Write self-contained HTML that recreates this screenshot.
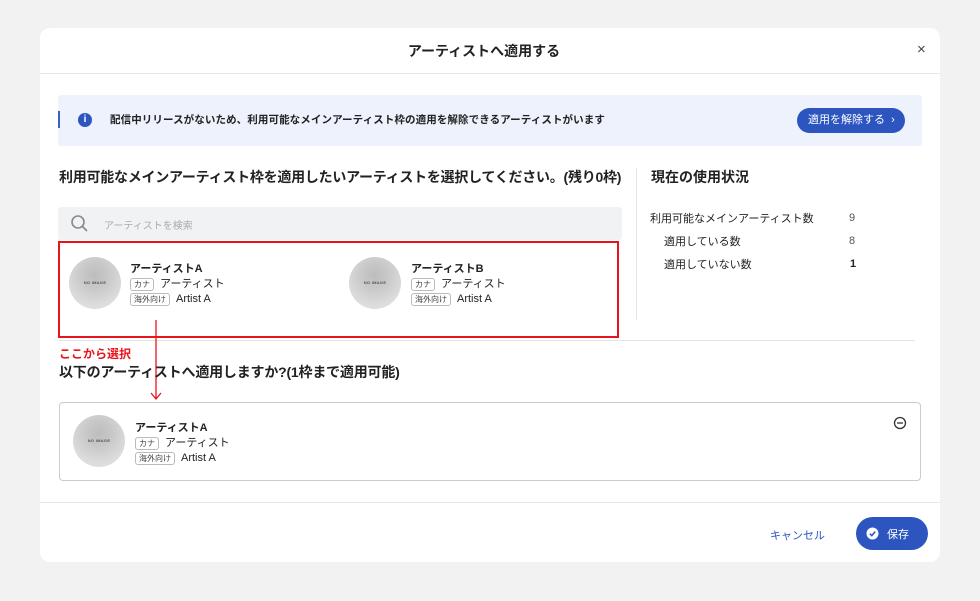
<!DOCTYPE html>
<html><head><meta charset="utf-8"><style>
*{box-sizing:border-box;margin:0;padding:0}
body{width:980px;height:601px;background:#f2f2f2;font-family:"Liberation Sans","Noto Sans CJK JP",sans-serif;color:#222;position:relative;overflow:hidden}
.a{position:absolute}
.modal{left:40px;top:28px;width:900px;height:534px;background:#fff;border-radius:10px}
.b{font-weight:bold}
.av{position:absolute;width:52px;height:52px;border-radius:50%;background:radial-gradient(circle at 50% 35%,#bdbdbd 0,#c8c8c8 30%,#dcdcdc 70%,#e6e6e6 100%);font-size:4px;font-weight:bold;color:#555;text-align:center;line-height:52px;letter-spacing:.3px}
.tag{display:inline-block;border:1px solid #bbb;border-radius:3px;font-size:8px;padding:0 3px;line-height:11px;color:#444;margin-right:6px}
.ln{font-size:11px;line-height:15px;white-space:nowrap}
</style></head><body>
<div class="a modal"></div>
<div class="a b" style="left:-6px;width:980px;top:41px;text-align:center;font-size:14px">アーティストへ適用する</div>
<div class="a" style="left:917px;top:41px;font-size:15px;color:#444">×</div>
<div class="a" style="left:40px;top:73px;width:900px;height:1px;background:#e6e6e6"></div>
<div class="a" style="left:58px;top:95px;width:864px;height:51px;background:#edf2fc;border-radius:3px"></div>
<div class="a" style="left:58px;top:111px;width:2px;height:17px;background:#3a5fc0"></div>
<div class="a" style="left:78px;top:113px;width:14px;height:14px;border-radius:50%;background:#2c55c0;color:#fff;font-size:10px;font-weight:bold;text-align:center;line-height:14px">i</div>
<div class="a b" style="left:110px;top:112px;font-size:10.5px;letter-spacing:0.1px;white-space:nowrap">配信中リリースがないため、利用可能なメインアーティスト枠の適用を解除できるアーティストがいます</div>
<div class="a" style="left:797px;top:108px;width:108px;height:25px;border-radius:13px;background:#2c55c0;color:#fff;font-size:11px;line-height:25px;padding-left:11px">適用を解除する&nbsp; ›</div>
<div class="a b" style="left:59px;top:167px;font-size:14px;letter-spacing:-0.25px;white-space:nowrap">利用可能なメインアーティスト枠を適用したいアーティストを選択してください。(残り0枠)</div>
<div class="a" style="left:636px;top:168px;width:1px;height:152px;background:#e3e3e3"></div>
<div class="a b" style="left:651px;top:167px;font-size:14px">現在の使用状況</div>
<div class="a" style="left:650px;top:210px;font-size:11px">利用可能なメインアーティスト数</div>
<div class="a" style="left:849px;top:212px;font-size:11px;color:#555">9</div>
<div class="a" style="left:664px;top:233px;font-size:11px">適用している数</div>
<div class="a" style="left:849px;top:235px;font-size:11px;color:#555">8</div>
<div class="a" style="left:664px;top:256px;font-size:11px">適用していない数</div>
<div class="a b" style="left:850px;top:258px;font-size:11px">1</div>
<div class="a" style="left:58px;top:207px;width:564px;height:33px;background:#f1f2f4;border-radius:3px"></div>
<svg class="a" style="left:70px;top:214px" width="20" height="20"><circle cx="8" cy="8" r="6" fill="none" stroke="#888" stroke-width="1.6"/><line x1="12.5" y1="12.5" x2="17" y2="17" stroke="#888" stroke-width="1.6"/></svg>
<div class="a" style="left:104px;top:217px;font-size:10px;color:#aaa">アーティストを検索</div>
<div class="a" style="left:58px;top:241px;width:561px;height:97px;border:2px solid #e8141b"></div>
<div class="av" style="left:69px;top:257px">NO IMAGE</div>
<div class="a" style="left:130px;top:262px"><div class="ln b">アーティストA</div><div class="ln"><span class="tag">カナ</span>アーティスト</div><div class="ln"><span class="tag">海外向け</span>Artist A</div></div>
<div class="av" style="left:349px;top:257px">NO IMAGE</div>
<div class="a" style="left:411px;top:262px"><div class="ln b">アーティストB</div><div class="ln"><span class="tag">カナ</span>アーティスト</div><div class="ln"><span class="tag">海外向け</span>Artist A</div></div>
<div class="a" style="left:58px;top:340px;width:857px;height:1px;background:#e3e3e3"></div>
<div class="a b" style="left:59px;top:345px;font-size:12px;color:#e8141b">ここから選択</div>
<svg class="a" style="left:150px;top:320px" width="12" height="82"><line x1="6" y1="0" x2="6" y2="79" stroke="#e8141b" stroke-width="1.3"/><polyline points="1,73 6,79 11,73" fill="none" stroke="#e8141b" stroke-width="1.3"/></svg>
<div class="a b" style="left:59px;top:362px;font-size:14px;letter-spacing:-0.2px">以下のアーティストへ適用しますか?(1枠まで適用可能)</div>
<div class="a" style="left:59px;top:402px;width:862px;height:79px;border:1px solid #ccc;border-radius:4px"></div>
<div class="av" style="left:73px;top:415px">NO IMAGE</div>
<div class="a" style="left:135px;top:421px"><div class="ln b">アーティストA</div><div class="ln"><span class="tag">カナ</span>アーティスト</div><div class="ln"><span class="tag">海外向け</span>Artist A</div></div>
<svg class="a" style="left:893px;top:416px" width="14" height="14"><circle cx="7" cy="7" r="5.5" fill="none" stroke="#333" stroke-width="1.3"/><line x1="4" y1="7" x2="10" y2="7" stroke="#333" stroke-width="1.3"/></svg>
<div class="a" style="left:40px;top:502px;width:900px;height:1px;background:#e6e6e6"></div>
<div class="a" style="left:770px;top:527px;font-size:11px;color:#2c55c0">キャンセル</div>
<div class="a" style="left:856px;top:517px;width:72px;height:33px;border-radius:17px;background:#2c55c0"></div>
<svg class="a" style="left:866px;top:527px" width="13" height="13"><circle cx="6.5" cy="6.5" r="6" fill="#fff"/><polyline points="3.8,6.7 5.8,8.6 9.2,4.6" fill="none" stroke="#2c55c0" stroke-width="1.5"/></svg>
<div class="a" style="left:887px;top:526px;font-size:11px;color:#fff">保存</div>
</body></html>
